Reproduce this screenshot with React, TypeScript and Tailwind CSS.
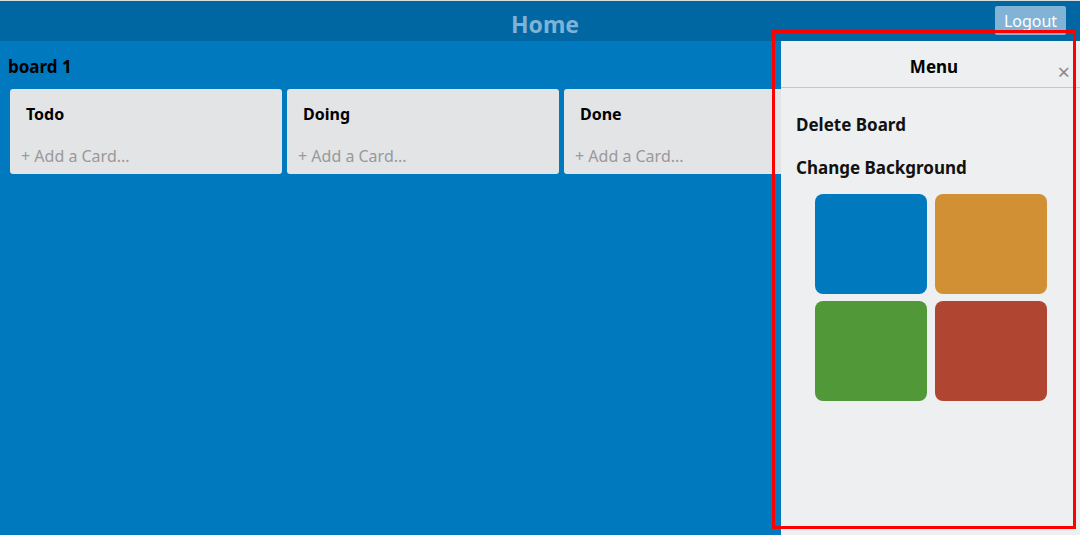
import React from "react";

const font = { fontFamily: '"Noto Sans", "Noto Sans CJK KR", sans-serif' };

function List({ title }: { title: string }) {
  return (
    <div className="w-[272px] shrink-0 h-[85px] bg-[#e2e4e6] rounded-[3px] flex flex-col">
      <div className="pl-[16px] pt-[13px] h-[50px] text-[16px] font-bold text-black leading-[24px]">{title}</div>
      <div className="pl-[11px] text-[16px] text-[#999999] leading-[20px] mt-[7px]">+ Add a Card...</div>
    </div>
  );
}

export default function App() {
  return (
    <div className="w-[1080px] h-[535px] flex flex-col overflow-hidden bg-[#0079bf] relative" style={font}>
      <div className="h-[41px] shrink-0 bg-[#0067a3] border-t border-[#d8dde0] relative flex items-center justify-center">
        <span className="text-[23px] font-bold text-[#7fb2d6] leading-none mt-[6px] ml-[10px]">Home</span>
        <button className="absolute right-[14px] top-[5px] w-[71px] h-[29px] bg-[#80b3d5] rounded-[2px] text-white text-[16px] leading-none">
          Logout
        </button>
      </div>
      <div className="flex-1 flex min-h-0">
        <div className="flex-1 min-w-0 overflow-hidden pt-[14px]">
          <div className="pl-[8px] text-[17px] font-bold text-black leading-[24px]">board 1</div>
          <div className="flex gap-[5px] pl-[10px] mt-[10px]">
            <List title="Todo" />
            <List title="Doing" />
            <List title="Done" />
          </div>
        </div>
        <div className="w-[299px] shrink-0 bg-[#edeff0] flex flex-col">
          <div className="h-[47px] shrink-0 border-b border-[#c8c8c8] relative flex items-center justify-center">
            <span className="text-[17px] font-bold text-black mt-[5px] ml-[7px]">Menu</span>
            <span className="absolute right-[10px] top-[19px] text-[#8a8a8a] text-[22px] leading-none">×</span>
          </div>
          <div className="pl-[15px] pt-[24px] text-[17px] font-bold text-[#111] leading-[26px]">Delete Board</div>
          <div className="pl-[15px] pt-[17px] text-[17px] font-bold text-[#111] leading-[26px]">Change Background</div>
          <div className="grid grid-cols-[112px_112px] gap-x-[8px] gap-y-[7px] pl-[34px] pt-[13px]">
            <div className="h-[100px] rounded-[8px] bg-[#0079bf]" />
            <div className="h-[100px] rounded-[8px] bg-[#d29034]" />
            <div className="h-[100px] rounded-[8px] bg-[#519839]" />
            <div className="h-[100px] rounded-[8px] bg-[#b04632]" />
          </div>
        </div>
      </div>
      <div className="absolute left-[772px] top-[30px] w-[304px] h-[499px] border-[3px] border-[#ff0000] pointer-events-none" />
    </div>
  );
}
